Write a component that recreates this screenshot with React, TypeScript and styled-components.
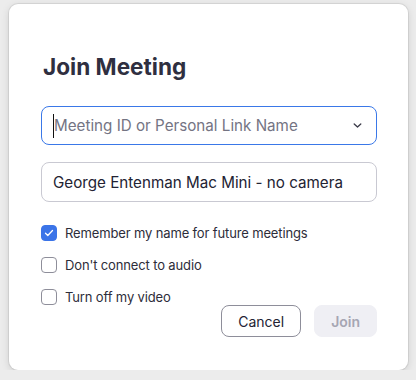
import styled, { createGlobalStyle } from "styled-components";

const GlobalStyle = createGlobalStyle`
  body {
    margin: 0;
    background: #ececec;
    font-family: Inter, "Liberation Sans", sans-serif;
  }
`;

const options = [
  { label: "Remember my name for future meetings", checked: true },
  { label: "Don't connect to audio", checked: false },
  { label: "Turn off my video", checked: false },
];

const App = () => {
  return (
    <>
      <GlobalStyle />
      <Dialog>
        <Title>Join Meeting</Title>
        <Field focused>
          <Caret />
          <Placeholder>Meeting ID or Personal Link Name</Placeholder>
          <svg width="9" height="5" viewBox="0 0 9 5">
            <polyline
              points="1.2,1 4.5,4 7.8,1"
              fill="none"
              stroke="#3a3a48"
              strokeWidth="1.3"
              strokeLinecap="round"
              strokeLinejoin="round"
            />
          </svg>
        </Field>
        <Field>
          <Value>George Entenman Mac Mini - no camera</Value>
        </Field>
        <Options>
          {options.map((o) => (
            <OptionRow key={o.label}>
              <Box checked={o.checked}>
                {o.checked && (
                  <svg width="10" height="8" viewBox="0 0 10 8">
                    <polyline
                      points="1.5,4.2 3.8,6.5 8.5,1.5"
                      fill="none"
                      stroke="#fff"
                      strokeWidth="1.3"
                      strokeLinecap="round"
                      strokeLinejoin="round"
                    />
                  </svg>
                )}
              </Box>
              <OptionLabel>{o.label}</OptionLabel>
            </OptionRow>
          ))}
        </Options>
        <Actions>
          <Button>Cancel</Button>
          <Button primary disabled>
            Join
          </Button>
        </Actions>
      </Dialog>
    </>
  );
};
export default App;

const Dialog = styled.div`
  box-sizing: border-box;
  display: flex;
  flex-direction: column;
  width: 399px;
  height: 366px;
  margin: 4px 0 0 9px;
  padding: 0 31px 0 32px;
  background: #fff;
  border-radius: 9px;
  box-shadow: 0 0 0 1px rgba(0, 0, 0, 0.07), 0 2px 9px rgba(0, 0, 0, 0.13);
`;

const Title = styled.h1`
  margin: 48px 0 0 2px;
  font-size: 22.6px;
  line-height: 30px;
  font-weight: 700;
  color: #2f2f40;
`;

const Field = styled.div<{ focused?: boolean }>`
  box-sizing: border-box;
  display: flex;
  align-items: center;
  height: ${(p) => (p.focused ? "39px" : "40px")};
  margin-top: ${(p) => (p.focused ? "24px" : "17px")};
  padding: 0 14px 0 11px;
  border: 1px solid ${(p) => (p.focused ? "#3a78e8" : "#c9c9d2")};
  border-radius: 8px;
  font-size: 15.2px;
  svg {
    margin-left: auto;
  }
`;

const Caret = styled.span`
  width: 1px;
  height: 24px;
  background: #111;
`;

const Placeholder = styled.span`
  color: #747483;
`;

const Value = styled.span`
  color: #232333;
`;

const Options = styled.div`
  display: flex;
  flex-direction: column;
  gap: 16px;
  margin-top: 23px;
`;

const OptionRow = styled.label`
  display: flex;
  align-items: center;
  gap: 8px;
  height: 16px;
`;

const Box = styled.span<{ checked?: boolean }>`
  box-sizing: border-box;
  display: flex;
  align-items: center;
  justify-content: center;
  width: 16px;
  height: 16px;
  border-radius: 4px;
  background: ${(p) => (p.checked ? "#3b74e8" : "#fff")};
  border: 1px solid ${(p) => (p.checked ? "#3b74e8" : "#8e8e9a")};
`;

const OptionLabel = styled.span`
  font-size: 13px;
  letter-spacing: -0.14px;
  color: #2d2d3a;
`;

const Actions = styled.div`
  display: flex;
  justify-content: flex-end;
  gap: 13px;
`;

const Button = styled.button<{ primary?: boolean }>`
  box-sizing: border-box;
  height: 32px;
  padding: 0 16px;
  min-width: ${(p) => (p.primary ? "62px" : "76px")};
  border-radius: 8px;
  font-family: inherit;
  font-size: 14px;
  font-weight: ${(p) => (p.primary ? 600 : 400)};
  color: ${(p) => (p.primary ? "#a6a6b3" : "#232333")};
  background: ${(p) => (p.primary ? "#efeff4" : "#fff")};
  border: 1px solid ${(p) => (p.primary ? "#efeff4" : "#8e8e9a")};
`;
